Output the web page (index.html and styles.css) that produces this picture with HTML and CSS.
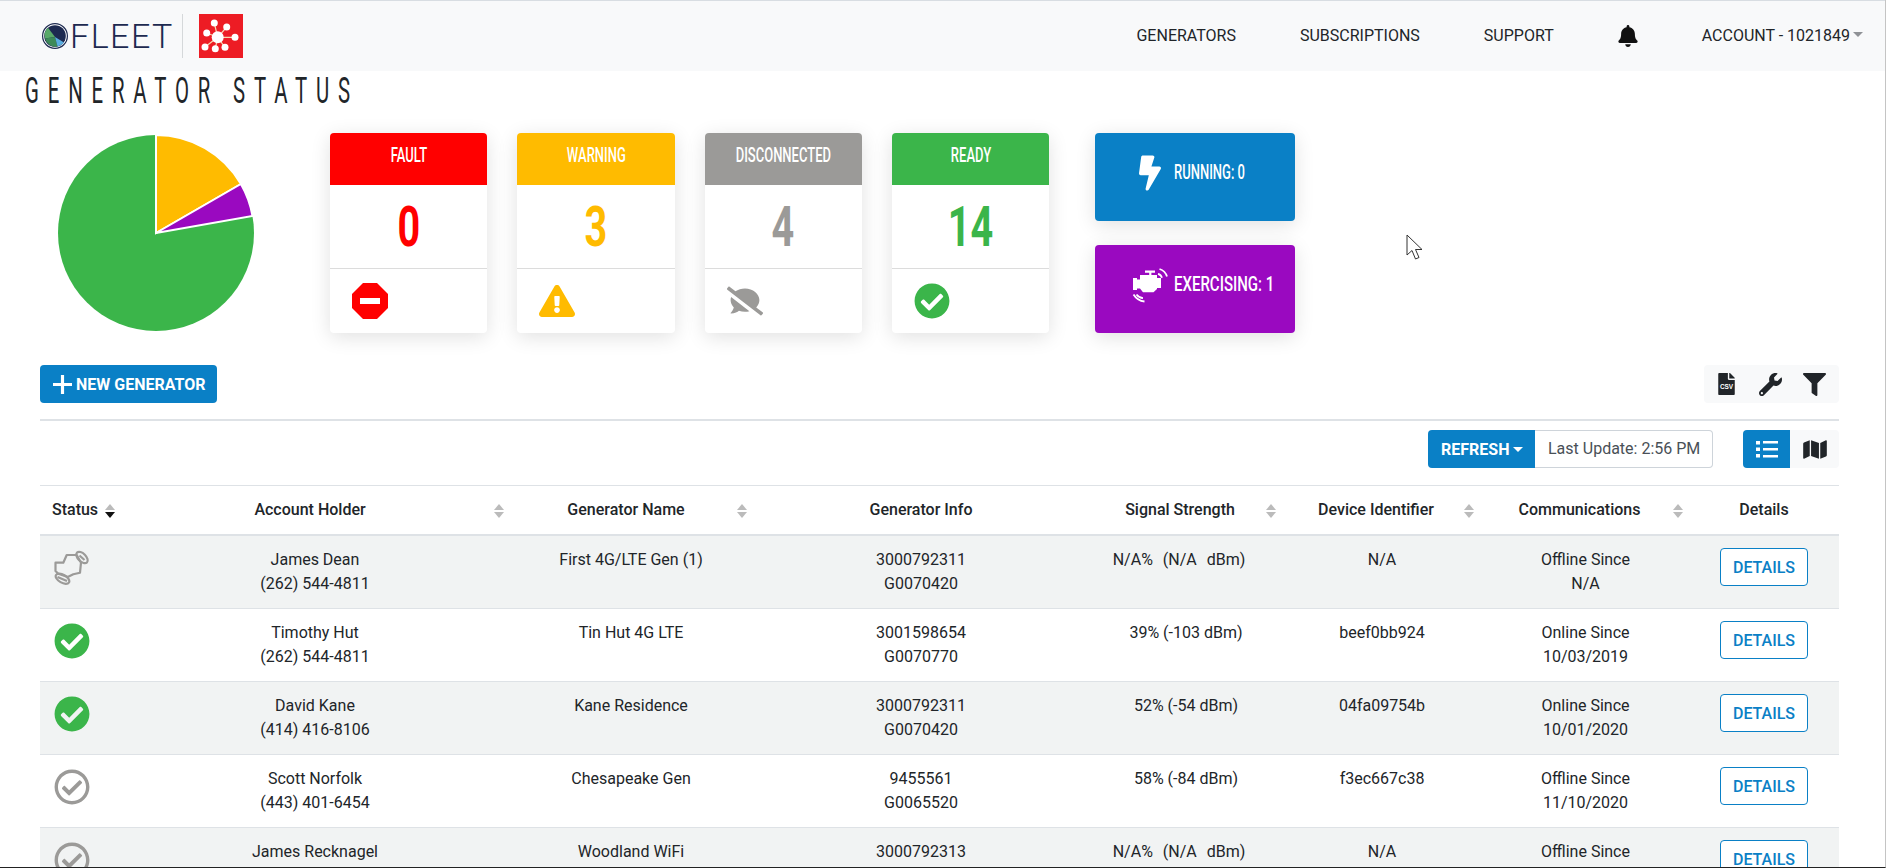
FILE: index.html
```html
<!DOCTYPE html>
<html lang="en">
<head>
<meta charset="utf-8">
<title>Generator Status</title>
<link rel="stylesheet" href="styles.css">
</head>
<body>
<svg class="defs" width="0" height="0" aria-hidden="true">
  <defs>
    <symbol id="i-check" viewBox="0 0 512 512"><path d="M504 256c0 136.967-111.033 248-248 248S8 392.967 8 256 119.033 8 256 8s248 111.033 248 248zM227.314 387.314l184-184c6.248-6.248 6.248-16.379 0-22.627l-22.627-22.627c-6.248-6.249-16.379-6.249-22.628 0L216 308.118l-70.059-70.059c-6.248-6.248-16.379-6.248-22.628 0l-22.627 22.627c-6.248 6.248-6.248 16.379 0 22.627l104 104c6.249 6.249 16.379 6.249 22.628.001z"/></symbol>
    <symbol id="i-check-o" viewBox="0 0 512 512"><path d="M256 8C119.033 8 8 119.033 8 256s111.033 248 248 248 248-111.033 248-248S392.967 8 256 8zm0 48c110.532 0 200 89.451 200 200 0 110.532-89.451 200-200 200-110.532 0-200-89.451-200-200 0-110.532 89.451-200 200-200m140.204 130.267l-22.536-22.718c-4.667-4.705-12.265-4.736-16.97-.068L215.346 303.697l-59.792-60.277c-4.667-4.705-12.265-4.736-16.97-.069l-22.719 22.536c-4.705 4.667-4.736 12.265-.068 16.971l90.781 91.516c4.667 4.705 12.265 4.736 16.97.068l172.589-171.204c4.704-4.668 4.734-12.266.067-16.971z"/></symbol>
  </defs>
</svg>

<header class="navbar">
  <div class="brand">
    <svg class="brand-mark" viewBox="0 0 26 26" aria-hidden="true">
      <circle cx="13" cy="13" r="12.4" fill="#fff" stroke="#1d2a50" stroke-width="1.2"/>
      <circle cx="13" cy="13" r="10.8" fill="#1d2a50"/>
      <path d="M6 4.8 13 14 3 15.5A10.8 10.8 0 0 1 6 4.8Z" fill="#58a968"/>
      <path d="M3 15.5 13 14 15.5 23.5A10.8 10.8 0 0 1 3 15.5Z" fill="#3d8a58"/>
      <path d="M13 14 22 19.5A10.8 10.8 0 0 1 15.5 23.5Z" fill="#5aaee0"/>
    </svg>
    <span class="brand-text">FLEET</span>
    <span class="brand-rule"></span>
    <svg class="brand-app" viewBox="0 0 44 44" aria-hidden="true">
      <rect width="44" height="44" fill="#ed1c24"/>
      <g stroke="#f7d9b0" stroke-width="1.2">
        <path d="M18.7 23.3 15.3 9M18.7 23.3 27.7 13M18.7 23.3H36M18.7 23.3 26 33.3M18.7 23.3 16.3 34.7M18.7 23.3 6 33M18.7 23.3 7.7 19"/>
      </g>
      <g fill="#fff">
        <circle cx="18.7" cy="23.3" r="6"/>
        <circle cx="15.3" cy="9" r="3.5"/>
        <circle cx="27.7" cy="13" r="3.5"/>
        <circle cx="36" cy="23.3" r="3.5"/>
        <circle cx="26" cy="33.3" r="3.5"/>
        <circle cx="16.3" cy="34.7" r="3.5"/>
        <circle cx="6" cy="33" r="3.5"/>
        <circle cx="7.7" cy="19" r="3.5"/>
      </g>
    </svg>
  </div>
  <nav class="nav-links">
    <a class="nav-link">GENERATORS</a>
    <a class="nav-link">SUBSCRIPTIONS</a>
    <a class="nav-link">SUPPORT</a>
    <svg class="nav-bell" viewBox="0 0 448 512" aria-hidden="true"><path d="M224 512c35.32 0 63.97-28.65 63.97-64H160.03c0 35.35 28.65 64 63.97 64zm215.39-149.71c-19.32-20.76-55.47-51.99-55.47-154.29 0-77.7-54.48-139.9-127.94-155.16V32c0-17.67-14.32-32-31.98-32s-31.98 14.33-31.98 32v20.84C118.56 68.1 64.08 130.3 64.08 208c0 102.3-36.15 133.53-55.47 154.29-6 6.45-8.66 14.16-8.61 21.71.11 16.4 12.98 32 32.1 32h383.8c19.12 0 32-15.6 32.1-32 .05-7.55-2.61-15.27-8.61-21.71z"/></svg>
    <a class="nav-link nav-account">ACCOUNT - 1021849<span class="nav-caret"></span></a>
  </nav>
</header>

<main class="page">
  <h1 class="title"><span class="title-text">GENERATOR STATUS</span></h1>

  <section class="summary">
    <svg class="pie" viewBox="0 0 196 196" aria-hidden="true">
      <circle cx="98" cy="98" r="98" fill="#3bb54a"/>
      <path d="M98 98V0A98 98 0 0 1 182.9 49Z" fill="#ffbb00" stroke="#fff" stroke-width="2"/>
      <path d="M98 98 182.9 49A98 98 0 0 1 194.5 81Z" fill="#9a09c0" stroke="#fff" stroke-width="2"/>
    </svg>

    <div class="cards">
      <article class="card card-fault">
        <div class="card-head"><span class="cond">FAULT</span></div>
        <div class="card-num"><span class="cond">0</span></div>
        <div class="card-foot">
          <svg class="card-ico" viewBox="0 0 36 36" aria-hidden="true"><path d="M11 0H25L36 11V25L25 36H11L0 25V11Z" fill="currentColor"/><rect x="8" y="15" width="20" height="6" fill="#fff"/></svg>
        </div>
      </article>
      <article class="card card-warn">
        <div class="card-head"><span class="cond">WARNING</span></div>
        <div class="card-num"><span class="cond">3</span></div>
        <div class="card-foot">
          <svg class="card-ico" viewBox="0 0 576 512" aria-hidden="true"><path fill="currentColor" d="M569.517 440.013C587.975 472.007 564.806 512 527.94 512H48.054c-36.937 0-59.999-40.055-41.577-71.987L246.423 23.985c18.467-32.009 64.72-31.951 83.154 0l239.94 416.028zM288 354c-25.405 0-46 20.595-46 46s20.595 46 46 46 46-20.595 46-46-20.595-46-46-46zm-43.673-165.346l7.418 136c.347 6.364 5.609 11.346 11.982 11.346h48.546c6.373 0 11.635-4.982 11.982-11.346l7.418-136c.375-6.874-5.098-12.654-11.982-12.654h-63.383c-6.884 0-12.356 5.78-11.981 12.654z"/></svg>
        </div>
      </article>
      <article class="card card-off">
        <div class="card-head"><span class="cond">DISCONNECTED</span></div>
        <div class="card-num"><span class="cond">4</span></div>
        <div class="card-foot">
          <svg class="card-ico" viewBox="0 0 640 512" aria-hidden="true"><path fill="currentColor" d="M64 240c0 49.6 21.4 95 57 130.7-12.6 50.3-54.3 95.2-54.8 95.8-2.2 2.3-2.8 5.7-1.5 8.7 1.3 2.9 4.1 4.8 7.3 4.8 66.3 0 116-31.8 140.6-51.4 32.7 12.3 69 19.4 107.4 19.4 27.4 0 53.7-3.6 78.4-10L72.9 186.4c-5.6 17.1-8.9 35-8.9 53.6zm569.8 218.1l-114.4-88.4C554.6 334.1 576 289.2 576 240c0-114.9-114.6-208-256-208-65.1 0-124.2 20.1-169.4 52.7L45.5 3.4C38.5-2 28.5-.8 23 6.2L3.4 31.4c-5.4 7-4.2 17 2.8 22.4l588.4 454.7c7 5.4 17 4.2 22.5-2.8l19.6-25.2c5.4-6.8 4.1-16.9-2.9-22.4z"/></svg>
        </div>
      </article>
      <article class="card card-ready">
        <div class="card-head"><span class="cond">READY</span></div>
        <div class="card-num"><span class="cond">14</span></div>
        <div class="card-foot">
          <svg class="card-ico" aria-hidden="true"><use href="#i-check" fill="currentColor"/></svg>
        </div>
      </article>
    </div>

    <div class="tiles">
      <div class="tile tile-run">
        <span class="tile-ico">
          <svg class="bolt" viewBox="0 0 320 512" aria-hidden="true"><path fill="#fff" d="M296 160H180.6l42.6-129.8C227.2 15 215.7 0 200 0H56C44 0 33.8 8.9 32.2 20.8l-32 240C-1.7 275.2 9.5 288 24 288h118.7L96.6 482.5c-3.6 15.2 8 29.5 23.3 29.5 8.4 0 16.4-4.4 20.8-12l176-304c9.3-15.9-2.2-36-20.7-36z"/></svg>
        </span>
        <span class="tile-label">RUNNING: 0</span>
      </div>
      <div class="tile tile-ex">
        <span class="tile-ico">
          <svg class="engine" viewBox="0 0 36 36" aria-hidden="true">
            <path fill="#fff" d="M13 3.5h10v2.200h-3.600V8H25v3h4v10h-4v1l-3.500 3.200H11L8 21.500H5V23H1V11h4v1.500h3V8h9.200V5.700H13Z"/>
            <path fill="none" stroke="#fff" stroke-width="1.800" d="M26 6.800c2 .5 3.400 2 4 4M27.500 2c3.600 1.200 6.400 4 7.500 7.500M12.500 34.500C8 34 4 31.500 1.500 27.500M11 31.200C8.500 31 6 29.500 4.500 27.500"/>
          </svg>
        </span>
        <span class="tile-label">EXERCISING: 1</span>
      </div>
    </div>
  </section>

  <section class="toolbar">
    <button class="btn btn-primary btn-new">
      <svg class="plus" viewBox="0 0 18 18" aria-hidden="true"><path fill="#fff" d="M7.500 0h3v7.500H18v3h-7.500V18h-3v-7.500H0v-3h7.500Z"/></svg>
      NEW GENERATOR
    </button>
    <div class="tools">
      <button class="tool">
        <svg class="tool-csv" viewBox="0 0 384 512" aria-hidden="true">
          <path fill="#212529" d="M224 136V0H24C10.700 0 0 10.700 0 24v464c0 13.300 10.700 24 24 24h336c13.300 0 24-10.700 24-24V160H248c-13.200 0-24-10.800-24-24zm160-14.100v6.100H256V0h6.100c6.400 0 12.500 2.500 17 7l97.900 98c4.500 4.500 7 10.600 7 16.900z"/>
          <text class="csv-label" x="192" y="370">CSV</text>
        </svg>
      </button>
      <button class="tool">
        <svg class="tool-ico" viewBox="0 0 512 512" aria-hidden="true"><path fill="#212529" d="M507.730 109.100c-2.240-9.030-13.540-12.090-20.120-5.510l-74.360 74.360-67.880-11.310-11.310-67.880 74.360-74.360c6.620-6.620 3.430-17.900-5.660-20.160-47.380-11.740-99.550.91-136.580 37.930-39.640 39.640-50.550 97.100-34.050 147.200L18.740 402.760c-24.990 24.990-24.990 65.510 0 90.500 24.990 24.990 65.510 24.990 90.500 0l213.210-213.210c50.120 16.710 107.470 5.680 147.370-34.220 37.070-37.070 49.700-89.320 37.910-136.730zM64 472c-13.250 0-24-10.750-24-24 0-13.260 10.750-24 24-24s24 10.740 24 24c0 13.250-10.750 24-24 24z"/></svg>
      </button>
      <button class="tool">
        <svg class="tool-ico" viewBox="0 0 512 512" aria-hidden="true"><path fill="#212529" d="M487.976 0H24.028C2.710 0-8.047 25.866 7.058 40.971L192 225.941V432c0 7.831 3.821 15.170 10.237 19.662l80 55.980C298.020 518.690 320 507.493 320 487.980V225.941l184.947-184.970C520.021 25.896 509.338 0 487.976 0z"/></svg>
      </button>
    </div>
  </section>

  <hr class="rule">

  <section class="controls">
    <div class="refresh">
      <button class="btn btn-primary btn-refresh">REFRESH<span class="btn-caret"></span></button>
      <span class="last-update">Last Update: 2:56 PM</span>
    </div>
    <div class="views">
      <button class="view view-on">
        <svg class="view-list" viewBox="0 0 22 18" aria-hidden="true"><path fill="#fff" d="M0 1h4v3.500H0ZM7 1h15v2.500H7ZM0 7.500h4V11H0ZM7 8h15v2.500H7ZM0 14h4v3.500H0ZM7 15h15v2.500H7Z"/></svg>
      </button>
      <button class="view">
        <svg class="view-map" viewBox="0 0 576 512" aria-hidden="true"><path fill="#212529" d="M0 117.660v346.320c0 11.320 11.430 19.060 21.940 14.860L160 416V32L20.120 87.950A32.006 32.006 0 0 0 0 117.660zM192 416l192 64V96L192 32v384zM554.060 33.160L416 96v384l139.880-55.950A31.996 31.996 0 0 0 576 394.340V48.020c0-11.320-11.430-19.060-21.940-14.860z"/></svg>
      </button>
    </div>
  </section>

  <table class="grid">
    <thead>
      <tr>
        <th class="c-status sortable sorted">Status</th>
        <th class="c-account sortable">Account Holder</th>
        <th class="c-name sortable">Generator Name</th>
        <th class="c-info">Generator Info</th>
        <th class="c-signal sortable">Signal Strength</th>
        <th class="c-device sortable">Device Identifier</th>
        <th class="c-comms sortable">Communications</th>
        <th class="c-details">Details</th>
      </tr>
    </thead>
    <tbody>
      <tr>
        <td class="c-status">
          <svg class="st-ico st-engine" viewBox="0 0 36 36" aria-hidden="true">
            <g fill="none" stroke="#9b9a98" stroke-width="2.200" stroke-linejoin="round">
              <path d="M1.500 12.700H9.300L12.700 5H22.700L27 12.700 26 22.700 19.300 24.300 13.700 27 4.300 23.700 1.500 21Z"/>
              <ellipse cx="28" cy="7.500" rx="7" ry="4" transform="rotate(45 28 7.500)"/>
              <path d="M25.500 5.500 30.500 10"/>
              <ellipse cx="8.500" cy="28.700" rx="7.500" ry="4" transform="rotate(30 8.500 28.700)"/>
              <path d="M3.500 27 13 31"/>
            </g>
          </svg>
        </td>
        <td class="c-account">James Dean<br>(262) 544-4811</td>
        <td class="c-name">First 4G/LTE Gen (1)</td>
        <td class="c-info">3000792311<br>G0070420</td>
        <td class="c-signal"><span class="sig-na">N/A% (N/A dBm)</span></td>
        <td class="c-device">N/A</td>
        <td class="c-comms">Offline Since<br>N/A</td>
        <td class="c-details"><button class="btn-details">DETAILS</button></td>
      </tr>
      <tr>
        <td class="c-status"><svg class="st-ico st-ok" aria-hidden="true"><use href="#i-check"/></svg></td>
        <td class="c-account">Timothy Hut<br>(262) 544-4811</td>
        <td class="c-name">Tin Hut 4G LTE</td>
        <td class="c-info">3001598654<br>G0070770</td>
        <td class="c-signal">39% (-103 dBm)</td>
        <td class="c-device">beef0bb924</td>
        <td class="c-comms">Online Since<br>10/03/2019</td>
        <td class="c-details"><button class="btn-details">DETAILS</button></td>
      </tr>
      <tr>
        <td class="c-status"><svg class="st-ico st-ok" aria-hidden="true"><use href="#i-check"/></svg></td>
        <td class="c-account">David Kane<br>(414) 416-8106</td>
        <td class="c-name">Kane Residence</td>
        <td class="c-info">3000792311<br>G0070420</td>
        <td class="c-signal">52% (-54 dBm)</td>
        <td class="c-device">04fa09754b</td>
        <td class="c-comms">Online Since<br>10/01/2020</td>
        <td class="c-details"><button class="btn-details">DETAILS</button></td>
      </tr>
      <tr>
        <td class="c-status"><svg class="st-ico st-idle" aria-hidden="true"><use href="#i-check-o"/></svg></td>
        <td class="c-account">Scott Norfolk<br>(443) 401-6454</td>
        <td class="c-name">Chesapeake Gen</td>
        <td class="c-info">9455561<br>G0065520</td>
        <td class="c-signal">58% (-84 dBm)</td>
        <td class="c-device">f3ec667c38</td>
        <td class="c-comms">Offline Since<br>11/10/2020</td>
        <td class="c-details"><button class="btn-details">DETAILS</button></td>
      </tr>
      <tr>
        <td class="c-status"><svg class="st-ico st-idle" aria-hidden="true"><use href="#i-check-o"/></svg></td>
        <td class="c-account">James Recknagel</td>
        <td class="c-name">Woodland WiFi</td>
        <td class="c-info">3000792313</td>
        <td class="c-signal"><span class="sig-na">N/A% (N/A dBm)</span></td>
        <td class="c-device">N/A</td>
        <td class="c-comms">Offline Since</td>
        <td class="c-details"><button class="btn-details">DETAILS</button></td>
      </tr>
    </tbody>
  </table>
</main>

<svg class="cursor" viewBox="0 0 20 28" aria-hidden="true">
  <path d="M1 1V21L6 16.500 9.500 25 13 23.500 9.500 15.500H16Z" fill="#fff" stroke="#333" stroke-width="1"/>
</svg>
<div class="frame"></div>
</body>
</html>
```

FILE: styles.css
```css
* { box-sizing: border-box; }

html, body {
  margin: 0;
  height: 868px;
  overflow: hidden;
  background: #fff;
}

body {
  font-family: Roboto, "Liberation Sans", sans-serif;
  font-size: 16px;
  line-height: 24px;
  color: #212529;
}

button { font-family: inherit; cursor: pointer; }

.defs { position: absolute; }

/* Navbar */
.navbar {
  display: flex;
  align-items: center;
  justify-content: space-between;
  height: 71px;
  padding: 0 23px 0 42px;
  background: #f8f9fa;
  border-top: 1px solid #d8dde2;
}

.brand { display: flex; align-items: center; }
.brand-mark { width: 26px; height: 26px; margin-right: 2px; }
.brand-text {
  font-weight: 300;
  font-size: 34px;
  line-height: 40px;
  letter-spacing: 1.5px;
  color: #1d2a50;
  width: 112px;
}
.brand-rule { width: 1px; height: 44px; background: #d5d8da; margin-right: 16px; }
.brand-app { width: 44px; height: 44px; }

.nav-links { display: flex; align-items: center; gap: 64px; }
.nav-link { color: #212529; white-space: nowrap; }
.nav-bell { width: 20px; height: 22px; fill: #111; }
.nav-account { display: flex; align-items: center; }
.nav-caret {
  width: 0;
  height: 0;
  margin-left: 3px;
  border-top: 5px solid #8f9296;
  border-left: 5px solid transparent;
  border-right: 5px solid transparent;
  transform: translateY(-2px);
}

/* Page */
.page { padding: 0 47px 0 40px; }

.title {
  margin: 0 0 21px -15px;
  height: 41px;
  font-weight: 400;
  font-size: 37px;
  line-height: 40px;
  white-space: nowrap;
}
.title-text {
  display: inline-block;
  letter-spacing: 16.1px;
  transform: scaleX(.55);
  transform-origin: left center;
}

/* Summary */
.summary { display: flex; height: 200px; padding-left: 18px; }
.pie { width: 196px; height: 196px; margin-top: 2px; margin-right: 76px; }

.cards { display: flex; gap: 30px; margin-right: 45.8px; }
.card {
  display: flex;
  flex-direction: column;
  width: 157.3px;
  background: #fff;
  border-radius: 4px;
  box-shadow: 0 4px 20px rgba(0, 0, 0, .12);
  overflow: hidden;
}
.cond {
  display: inline-block;
  transform: scaleX(.65);
  white-space: nowrap;
}
.card-head {
  height: 52px;
  padding-top: 10px;
  color: #fff;
  font-weight: 500;
  font-size: 20px;
  text-align: center;
}
.card-num {
  display: flex;
  align-items: center;
  justify-content: center;
  height: 83px;
  font-weight: 700;
  font-size: 55px;
  line-height: 60px;
  background: #fff;
}
.card-num .cond { transform: scaleX(.72); }
.card-foot {
  display: flex;
  align-items: center;
  flex: 1;
  padding-left: 22px;
  border-top: 1px solid #dcdcdc;
}
.card-ico { width: 36px; height: 36px; color: inherit; }

.card-fault .card-head { background: #ff0000; }
.card-fault .card-num, .card-fault .card-foot { color: #ff0000; }
.card-warn .card-head { background: #ffbb00; }
.card-warn .card-num, .card-warn .card-foot { color: #ffbb00; }
.card-off .card-head { background: #9b9a98; }
.card-off .card-num, .card-off .card-foot { color: #9b9a98; }
.card-ready .card-head { background: #3bb54a; }
.card-ready .card-num, .card-ready .card-foot { color: #3bb54a; }

.tiles { display: flex; flex-direction: column; gap: 24px; width: 200px; }
.tile {
  display: flex;
  align-items: center;
  height: 88px;
  padding: 22px 0 30px 37px;
  border-radius: 4px;
  color: #fff;
  box-shadow: 0 4px 20px rgba(0, 0, 0, .12);
}
.tile-run { background: #0a80c6; }
.tile-ex { background: #9a09c0; }
.tile-ico { display: flex; justify-content: center; width: 36px; margin-right: 6px; }
.bolt { width: 22px; height: 36px; }
.engine { width: 36px; height: 36px; }
.tile-label {
  font-weight: 500;
  font-size: 20px;
  white-space: nowrap;
  transform: scaleX(.65);
  transform-origin: left center;
  margin-top: -3px;
}
.tile-ex .tile-label { transform: scaleX(.75); }

/* Toolbar */
.toolbar {
  display: flex;
  justify-content: space-between;
  height: 38px;
  margin-top: 32px;
}
.btn {
  display: flex;
  align-items: center;
  height: 38px;
  border: 0;
  border-radius: 4px;
  font-size: 16px;
  font-weight: 700;
  color: #fff;
  white-space: nowrap;
}
.btn-primary { background: #0a80c6; }
.btn-new { width: 177px; padding: 0 0 0 13px; }
.plus { width: 19px; height: 19px; margin-right: 4px; }

.tools {
  display: flex;
  align-items: center;
  width: 135px;
  padding-right: 3px;
  background: #f8f9fa;
  border-radius: 4px;
}
.tool {
  display: flex;
  flex: 1;
  align-items: center;
  justify-content: center;
  height: 38px;
  padding: 0;
  background: none;
  border: 0;
}
.tool-csv { width: 17px; height: 22px; }
.tool-ico { width: 23px; height: 23px; }
.csv-label {
  font-family: "Liberation Sans", sans-serif;
  font-size: 150px;
  font-weight: 700;
  fill: #fff;
  text-anchor: middle;
}

.rule {
  height: 2px;
  margin: 16px 0 9px;
  border: 0;
  background: #dee2e6;
}

/* Controls */
.controls { display: flex; justify-content: flex-end; gap: 30px; height: 38px; }
.refresh { display: flex; }
.btn-refresh { width: 107px; padding: 0 0 0 13px; border-radius: 4px 0 0 4px; }
.btn-caret {
  width: 0;
  height: 0;
  margin-left: 4px;
  border-top: 5px solid #fff;
  border-left: 5px solid transparent;
  border-right: 5px solid transparent;
}
.last-update {
  display: flex;
  align-items: center;
  width: 178px;
  padding-left: 13px;
  color: #495057;
  background: #fff;
  border: 1px solid #ced4da;
  border-left: 0;
  border-radius: 0 4px 4px 0;
}
.views { display: flex; }
.view {
  display: flex;
  align-items: center;
  justify-content: center;
  width: 49px;
  height: 38px;
  padding: 0;
  border: 0;
  background: #f8f9fa;
  border-radius: 0 4px 4px 0;
}
.view-on { width: 47px; background: #0a80c6; border-radius: 4px 0 0 4px; }
.view-list { width: 22px; height: 18px; }
.view-map { width: 24px; height: 21px; }

/* Table */
.grid {
  width: 1799px;
  margin-top: 17px;
  table-layout: fixed;
  border-collapse: collapse;
  text-align: center;
}
.grid th {
  position: relative;
  padding: 12px;
  font-weight: 500;
  border-top: 1px solid #dee2e6;
  border-bottom: 2px solid #dee2e6;
}
.grid td {
  height: 73px;
  padding: 12px;
  vertical-align: top;
  border-top: 1px solid #dee2e6;
}
.grid tbody tr:nth-child(odd) { background: #f1f3f3; }

.grid th.c-status { width: 85px; text-align: left; }
.grid th.c-account { width: 380px; padding-right: 22px; }
.grid th.c-name { width: 243px; padding-right: 13px; }
.grid th.c-info { width: 344px; padding-left: 14px; }
.grid th.c-signal { width: 185px; padding-right: 21px; }
.grid th.c-device { width: 198px; }
.grid th.c-comms { width: 209px; }
.grid th.c-details { width: 155px; padding-left: 17px; }

.grid td.c-status { padding-left: 14px; }
.grid td.c-name { padding-right: 3px; }
.grid td.c-info { padding-left: 14px; }
.grid td.c-signal { padding-right: 9px; }
.grid td.c-device { padding-left: 24px; }
.grid td.c-comms { padding-left: 24px; }
.grid td.c-details { padding-left: 17px; }

.sig-na { display: inline-block; word-spacing: 6px; margin-right: 14px; white-space: nowrap; }

.sortable::before,
.sortable::after {
  content: "";
  position: absolute;
  right: 1px;
  width: 0;
  height: 0;
  border-left: 5px solid transparent;
  border-right: 5px solid transparent;
}
.sortable::before { top: 18px; border-bottom: 6px solid #bbb; }
.sortable::after { top: 26px; border-top: 6px solid #bbb; }
.grid th.c-status.sortable::before,
.grid th.c-status.sortable::after { right: 10px; }
.grid th.sorted::after { border-top-color: #111; }

.st-ico { display: block; width: 36px; height: 36px; margin-top: 2px; }
.st-ok { fill: #3bb54a; }
.st-idle { fill: #9b9a98; }

.btn-details {
  width: 88px;
  height: 38px;
  padding: 0;
  font-size: 16px;
  font-weight: 500;
  color: #0a80c6;
  background: #fff;
  border: 1px solid #0a80c6;
  border-radius: 4px;
}

/* Overlays */
.cursor {
  position: absolute;
  left: 1406px;
  top: 234px;
  width: 20px;
  height: 28px;
}
.frame {
  position: fixed;
  inset: 0;
  border-right: 1px solid #c4c4c4;
  border-bottom: 1px solid #222;
  pointer-events: none;
}
```
